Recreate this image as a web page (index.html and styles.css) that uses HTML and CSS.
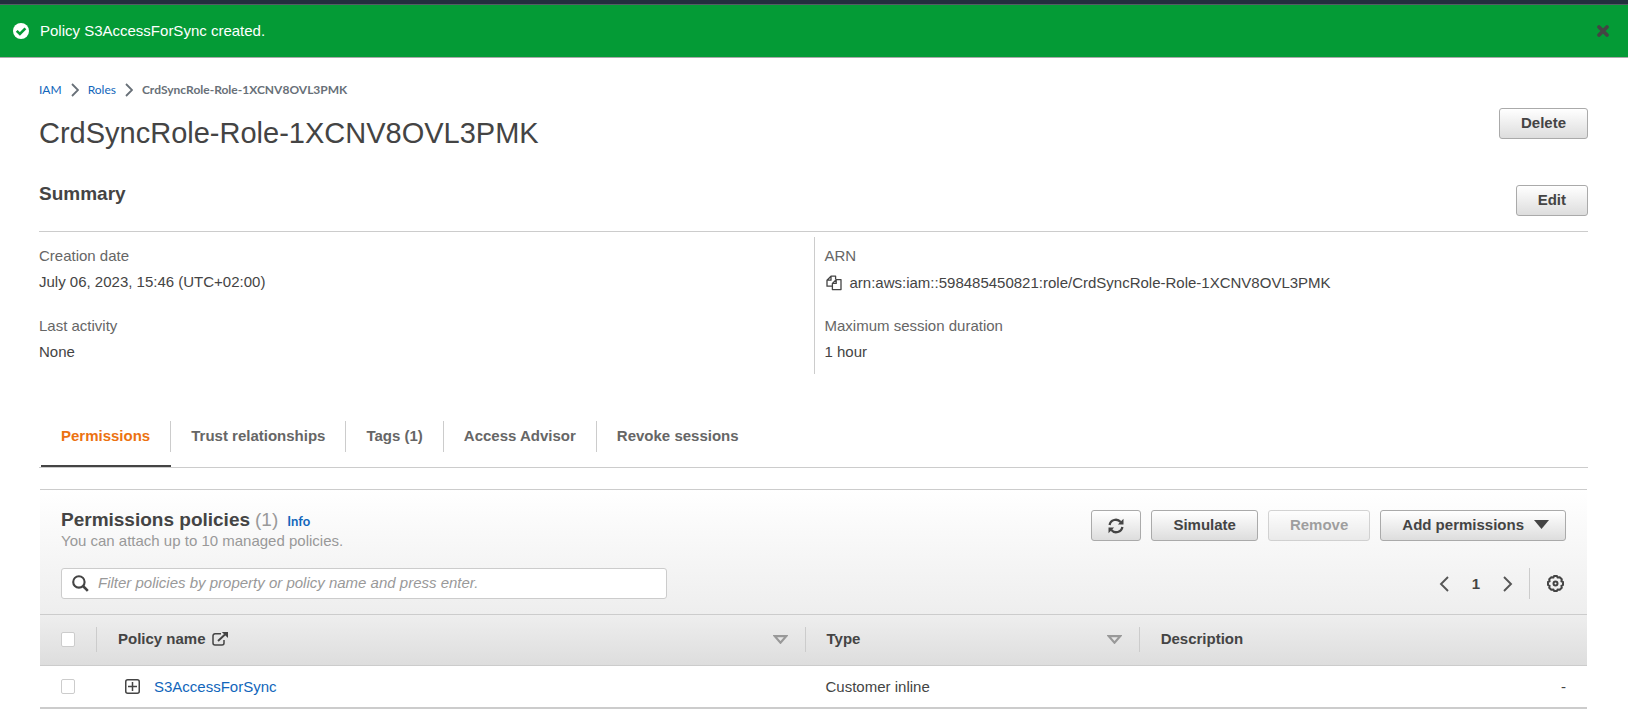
FILE: index.html
```html
<!DOCTYPE html>
<html lang="en">
<head>
<meta charset="utf-8">
<title>CrdSyncRole-Role-1XCNV8OVL3PMK - IAM</title>
<link rel="stylesheet" href="styles.css">
</head>
<body>
<div class="topbar"></div>
<div class="flash" role="status">
  <svg class="flash-icon" width="16" height="16" viewBox="0 0 16 16"><circle cx="8" cy="8" r="8" fill="#fff"/><path d="M3.7 7.8 6.9 11 12.4 5.4" fill="none" stroke="#049b36" stroke-width="2.6"/></svg>
  <span class="flash-text">Policy S3AccessForSync created.</span>
  <button class="icon-button" type="button" aria-label="Dismiss"><svg width="14" height="14" viewBox="0 0 14 14"><path d="M3 3 11 11M11 3 3 11" stroke="#444" stroke-width="3.8" stroke-linecap="round"/></svg></button>
</div>

<main class="page">
  <nav class="breadcrumbs" aria-label="Breadcrumbs">
    <a href="#">IAM</a>
    <svg width="8" height="14" viewBox="0 0 8 14"><path d="M1 1 7 7 1 13" fill="none" stroke="#687078" stroke-width="1.8"/></svg>
    <a href="#">Roles</a>
    <svg width="8" height="14" viewBox="0 0 8 14"><path d="M1 1 7 7 1 13" fill="none" stroke="#687078" stroke-width="1.8"/></svg>
    <span class="current">CrdSyncRole-Role-1XCNV8OVL3PMK</span>
  </nav>

  <header class="title-row">
    <h1>CrdSyncRole-Role-1XCNV8OVL3PMK</h1>
    <button class="button" type="button">Delete</button>
  </header>

  <section class="summary">
    <div class="summary-head">
      <h2>Summary</h2>
      <button class="button" type="button">Edit</button>
    </div>
    <div class="summary-grid">
      <dl class="details">
        <div><dt>Creation date</dt><dd>July 06, 2023, 15:46 (UTC+02:00)</dd></div>
        <div><dt>Last activity</dt><dd>None</dd></div>
      </dl>
      <dl class="details">
        <div><dt>ARN</dt><dd class="arn"><button class="icon-button" type="button" aria-label="Copy ARN"><svg width="16" height="16" viewBox="0 0 16 16" fill="none" stroke="#444" stroke-width="1.3" stroke-linejoin="round"><path d="M6.2 11.2H1V5.2L5 1.2H9.6V4.6M5 1.2V5.2H1"/><path d="M10.2 4.6H15V14.6H6.4V8.4ZM10.2 4.6V8.4H6.4"/></svg></button><span>arn:aws:iam::598485450821:role/CrdSyncRole-Role-1XCNV8OVL3PMK</span></dd></div>
        <div><dt>Maximum session duration</dt><dd>1 hour</dd></div>
      </dl>
    </div>
  </section>

  <div class="tabs" role="tablist">
    <button class="tab active" role="tab" type="button" aria-selected="true"><span>Permissions</span></button>
    <button class="tab" role="tab" type="button"><span>Trust relationships</span></button>
    <button class="tab" role="tab" type="button"><span>Tags (1)</span></button>
    <button class="tab" role="tab" type="button"><span>Access Advisor</span></button>
    <button class="tab" role="tab" type="button"><span>Revoke sessions</span></button>
  </div>

  <section class="panel">
    <div class="panel-head">
      <div class="panel-top">
        <div>
          <div class="panel-title"><h2>Permissions policies</h2><span class="count">(1)</span><a class="info" href="#">Info</a></div>
          <p class="hint">You can attach up to 10 managed policies.</p>
        </div>
        <div class="actions">
          <button class="button refresh" type="button" aria-label="Refresh"><svg width="16" height="16" viewBox="0 0 16 16" fill="none" stroke="#444" stroke-width="2.3"><path d="M1.6 7A6.3 6.3 0 0 1 12.6 4M14.4 9A6.3 6.3 0 0 1 3.4 12"/><path d="M15.5 .8V6.4H9.9ZM.5 15.2V9.6H6.1Z" fill="#444" stroke="none"/></svg></button>
          <button class="button" type="button">Simulate</button>
          <button class="button" type="button" disabled>Remove</button>
          <button class="button menu" type="button">Add permissions<svg width="15" height="9" viewBox="0 0 15 9"><path d="M0 0H15L7.5 9Z" fill="#444"/></svg></button>
        </div>
      </div>
      <div class="panel-tools">
        <label class="search">
          <svg width="17" height="17" viewBox="0 0 17 17" fill="none" stroke="#444"><circle cx="6.9" cy="6.9" r="5.7" stroke-width="2.1"/><path d="M11 11 15.8 15.8" stroke-width="2.6"/></svg>
          <input type="text" aria-label="Filter policies" placeholder="Filter policies by property or policy name and press enter.">
        </label>
        <div class="pager">
          <button class="icon-button" type="button" aria-label="Previous page"><svg width="10" height="16" viewBox="0 0 10 16"><path d="M9 1 2 8 9 15" fill="none" stroke="#555" stroke-width="1.9"/></svg></button>
          <span class="page-number">1</span>
          <button class="icon-button" type="button" aria-label="Next page"><svg width="10" height="16" viewBox="0 0 10 16"><path d="M1 1 8 8 1 15" fill="none" stroke="#555" stroke-width="1.9"/></svg></button>
          <span class="settings"><button class="icon-button" type="button" aria-label="Preferences"><svg width="17" height="17" viewBox="0 0 17 17" fill="none" stroke="#444" stroke-width="2"><path d="M7 1H10L10.6 2.6 12.7 2.2 14.8 4.3 14.4 6.4 16 7V10L14.4 10.6 14.8 12.7 12.7 14.8 10.6 14.4 10 16H7L6.4 14.4 4.3 14.8 2.2 12.7 2.6 10.6 1 10V7L2.600 6.400 2.200 4.300 4.300 2.200 6.400 2.600Z" stroke-linejoin="round"/><circle cx="8.500" cy="8.500" r="2"/></svg></button></span>
        </div>
      </div>
    </div>

    <table class="policies">
      <colgroup><col class="col-check"><col class="col-name"><col class="col-type"><col></colgroup>
      <thead>
        <tr>
          <th class="check"><input type="checkbox" aria-label="Select all policies"></th>
          <th><div class="th"><span>Policy name</span><svg width="16" height="14" viewBox="0 0 16 14" fill="none" stroke="#444" stroke-width="1.5"><path d="M9 1.8H3A2 2 0 0 0 1 3.8V11A2 2 0 0 0 3 13H10A2 2 0 0 0 12 11V8"/><path d="M6 9 13 2.5" stroke-width="1.9"/><path d="M9.800 0H16V6Z" fill="#444" stroke="none"/></svg><button class="icon-button sort" type="button" aria-label="Sort by policy name"><svg width="15" height="9" viewBox="0 0 15 9"><path d="M1.8 1.2H13.2L7.5 7.7Z" fill="none" stroke="#999" stroke-width="2.2"/></svg></button></div></th>
          <th><div class="th"><span>Type</span><button class="icon-button sort" type="button" aria-label="Sort by type"><svg width="15" height="9" viewBox="0 0 15 9"><path d="M1.8 1.2H13.2L7.5 7.7Z" fill="none" stroke="#999" stroke-width="2.2"/></svg></button></div></th>
          <th><div class="th"><span>Description</span></div></th>
        </tr>
      </thead>
      <tbody>
        <tr>
          <td class="check"><input type="checkbox" aria-label="Select S3AccessForSync"></td>
          <td class="name"><div class="policy"><button class="icon-button" type="button" aria-label="Expand"><svg width="15" height="15" viewBox="0 0 15 15" fill="none" stroke="#444" stroke-width="1.5"><rect x=".75" y=".75" width="13.5" height="13.5" rx="2"/><path d="M3 7.5H12M7.5 3V12"/></svg></button><a href="#">S3AccessForSync</a></div></td>
          <td class="type">Customer inline</td>
          <td class="description">-</td>
        </tr>
      </tbody>
    </table>
  </section>
</main>
</body>
</html>
```

FILE: styles.css
```css
* { box-sizing: border-box; }

body {
  margin: 0;
  background: #fff;
  color: #444;
  font: 15px/20px "Liberation Sans", Arial, sans-serif;
}

h1, h2, p, dl, dd { margin: 0; }
a { color: #1166bb; text-decoration: none; }
svg { display: block; flex: none; }

.icon-button {
  display: block;
  padding: 0;
  border: 0;
  background: none;
}

.topbar {
  height: 5px;
  background: #232f3e;
  border-bottom: 1px solid #545b64;
}

.flash {
  display: flex;
  align-items: center;
  gap: 11px;
  height: 53px;
  padding: 0 18px 0 13px;
  background: #049b36;
  border-bottom: 1px solid #aaa;
  color: #fff;
}
.flash-text { flex: 1; }

.page { padding: 22px 40px 10px 39px; }

.breadcrumbs {
  display: flex;
  align-items: center;
  gap: 9px;
  font: 12px/20px Lato, sans-serif;
}
.breadcrumbs .current { color: #687078; font-weight: 700; }

.title-row {
  display: flex;
  align-items: flex-start;
  justify-content: space-between;
  padding-top: 8px;
}
h1 { padding-top: 8px; font-size: 29px; font-weight: 400; line-height: 34px; }
h2 { font-size: 19px; font-weight: 700; line-height: 22px; }

.button {
  height: 31px;
  padding: 0 21px 2px;
  border: 1px solid #aaa;
  border-radius: 3px;
  background: linear-gradient(#fff, #ddd);
  color: #444;
  font: 700 15px/27px "Liberation Sans", Arial, sans-serif;
}
.button:disabled { opacity: 0.5; }

.summary { padding-top: 35px; }
.summary-head {
  display: flex;
  align-items: flex-start;
  justify-content: space-between;
  padding-bottom: 15px;
  border-bottom: 1px solid #ccc;
}
.summary-head h2 { margin-top: -2px; }
.summary-grid {
  display: grid;
  grid-template-columns: 1fr 1fr;
  padding-top: 5px;
}
.details {
  display: grid;
  gap: 18px;
  padding: 9px 0 6px;
}
.details + .details { padding-left: 10px; border-left: 1px solid #ccc; }
dt { color: #666; }
dd { padding-top: 6px; }
.details > div { height: 52px; }
.arn { display: flex; align-items: center; gap: 8px; padding: 7px 0 0 1px; }

.tabs {
  display: flex;
  margin-top: 33px;
  padding-left: 2px;
  border-bottom: 1px solid #ccc;
}
.tab {
  padding: 14px 0 13px;
  border: 0;
  border-bottom: 2px solid transparent;
  background: none;
  color: #666;
  font: 700 15px/30px "Liberation Sans", Arial, sans-serif;
}
.tab span {
  display: block;
  padding: 0 20px 1px;
  border-right: 1px solid #ccc;
}
.tab:last-child span { border-right: 0; }
.tab.active { border-bottom-color: #444; color: #ec7211; }

.panel {
  margin: 21px 1px 0;
  border-top: 1px solid #ccc;
  border-bottom: 2px solid #ccc;
}
.panel-head {
  padding: 20px 21px 15px;
  background: linear-gradient(#fff, #eee);
  border-bottom: 1px solid #ccc;
}
.panel-top { display: flex; justify-content: space-between; }
.panel-title { display: flex; align-items: baseline; height: 21px; line-height: 20px; }
.panel-title h2 { line-height: 20px; }
.count { padding-left: 5px; color: #999; font-size: 19px; }
.info { padding-left: 9px; font: 700 13px/20px Lato, sans-serif; }
.hint { color: #999; }
.actions { display: flex; gap: 10px; }
.refresh { padding: 0 16px; }
.menu { display: flex; align-items: center; gap: 10px; padding-right: 16px; }

.panel-tools {
  display: flex;
  justify-content: space-between;
  padding-top: 17px;
}
.search {
  display: flex;
  align-items: center;
  gap: 9px;
  width: 40.25%;
  height: 31px;
  padding: 0 10px;
  border: 1px solid #ccc;
  border-radius: 3px;
  background: #fff;
}
.search input {
  flex: 1;
  min-width: 0;
  padding: 0 0 2px;
  border: 0;
  outline: 0;
  background: none;
  color: #444;
  font: 15px/20px "Liberation Sans", Arial, sans-serif;
}
.search input::placeholder { color: #999; font-style: italic; opacity: 1; }
.pager { display: flex; align-items: center; gap: 23px; }
.page-number { font-weight: 700; }
.settings {
  display: flex;
  align-items: center;
  height: 31px;
  margin-left: -7px;
  padding: 0 2px 0 17px;
  border-left: 1px solid #ccc;
}

.policies {
  width: 100%;
  border-spacing: 0;
  table-layout: fixed;
}
.col-check { width: 56px; }
.col-name { width: 45.8%; }
.col-type { width: 21.6%; }
.policies th {
  height: 51px;
  padding: 0 0 2px;
  border-bottom: 1px solid #ccc;
  text-align: left;
}
.policies thead tr { background: linear-gradient(#eee, #ddd); }
.th {
  display: flex;
  align-items: center;
  gap: 6px;
  height: 25px;
  padding: 0 17px 0 21px;
  border-left: 1px solid #ccc;
}
.sort { margin-left: auto; }
.policies td { height: 41px; padding: 0 21px; }
.policies .check { padding-left: 21px; }
.policies .name { padding-left: 29px; }
.policies input {
  display: block;
  appearance: none;
  width: 14px;
  height: 15px;
  margin: 0;
  border: 1px solid #ccc;
  border-radius: 2px;
  background: #fff;
}
.policy { display: flex; align-items: center; gap: 14px; }
.policies .description { text-align: right; }
```
